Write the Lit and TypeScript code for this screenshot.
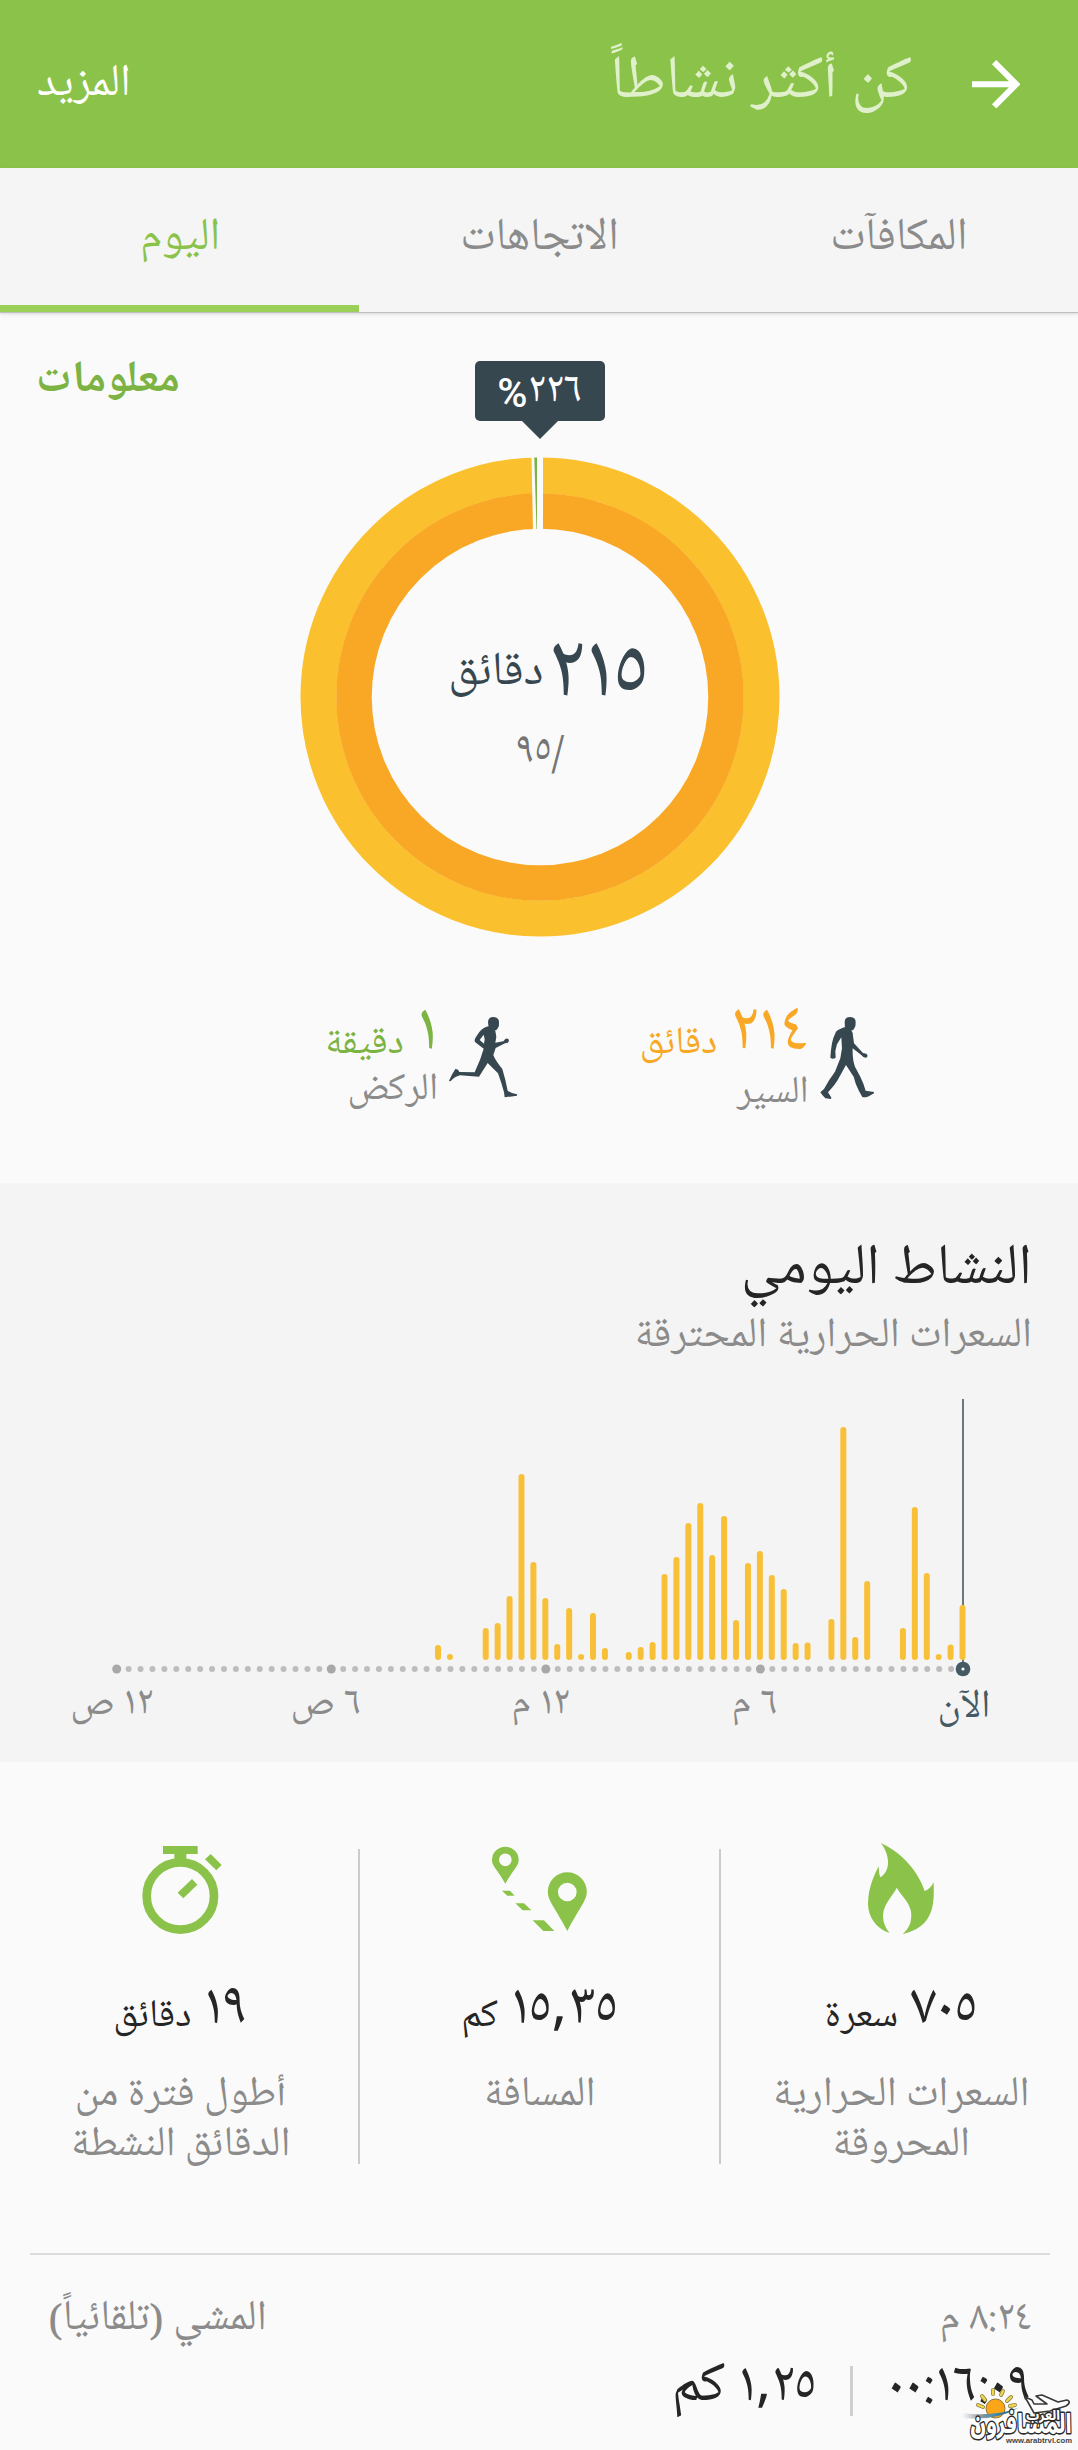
import { LitElement, html, css, svg } from "lit";
import { customElement } from "lit/decorators.js";

/* Slot index (20 minute steps from midnight) and bar height in px. */
const BARS: [number, number][] = [
  [27, 15], [28, 6], [31, 32], [32, 37], [33, 64], [34, 186], [35, 98], [36, 62],
  [37, 16], [38, 52], [39, 6], [40, 47], [41, 12], [43, 8], [44, 13], [45, 18],
  [46, 86], [47, 103], [48, 137], [49, 157], [50, 105], [51, 144], [52, 40],
  [53, 97], [54, 109], [55, 85], [56, 71], [57, 17], [58, 17.5], [60, 41],
  [61, 233], [62, 23], [63, 79], [66, 32], [67, 153], [68, 87], [69, 6],
  [70, 15.5], [71, 55],
];
const STEP = 11.92;
const START = 116.7;
const NOW = 71;
const slotX = (i: number) => START + i * STEP;

const arrowIcon = html`<svg class="arrow" viewBox="4 4 16 16">
  <path fill="#fff" d="M12 4l-1.41 1.41L16.17 11H4v2h12.17l-5.58 5.59L12 20l8-8z" />
</svg>`;

const walkIcon = html`<svg width="54.3" height="82.3" viewBox="1139 36 163 247">
  <g fill="#37474f">
    <path d="M1213 51Q1213 36 1230 36Q1247 37 1246 53Q1247 64 1241 72Q1236 78 1230 76L1214 70Z" />
    <path d="M1215 66Q1195 72 1187 80Q1178 98 1175 115L1172 135L1170 158Q1178 165 1186 158L1185 138L1190 118L1203 97L1205 130L1200 160L1184 200Q1165 225 1151 252L1140 262Q1146 272 1155 280L1172 282L1173 278L1163 262Q1186 238 1195 220L1217 180L1240 215Q1246 240 1256 258L1266 276Q1276 281 1302 264L1301 261L1276 257Q1270 235 1260 215L1244 185Q1236 165 1237 130L1262 149Q1272 161 1280 157Q1284 151 1278 146L1268 144L1241 115L1238 92Q1238 82 1232 74Z" />
  </g>
</svg>`;

const runIcon = html`<svg width="68" height="81" viewBox="27 36 204 243">
  <g fill="#37474f">
    <path d="M144 52Q144 36 161 36Q178 38 177 52Q179 64 172 72Q166 80 158 76L146 68Z" />
    <path fill-rule="evenodd" d="M148 64L166 78L169 95L166 113L190 109L196 102Q206 98 207 108Q204 116 195 115L167 129L160 150Q165 165 187 192Q197 225 203 257Q215 265 231 268L231 272L194 277L192 262Q184 232 174 205L143 174L117 215L60 211Q42 216 32 229L27 228Q34 210 46 192Q55 192 58 201L104 202L121 162L131 131L106 112Q101 106 108 96L118 81Q130 66 148 64ZM131 89L119 105L132 116L134 103Z" />
  </g>
</svg>`;

const flameIcon = html`<svg width="66.7" height="91" viewBox="1164 24 200 273">
  <path fill="#8bc34a" d="M1202 24C1250 45 1310 95 1334 168C1345 165 1355 155 1361 142C1362 200 1367 275 1268 297C1290 280 1296 255 1293 230C1288 200 1265 184 1250 158C1240 182 1212 202 1209 240C1209 265 1218 280 1229 294C1185 280 1163 240 1164 205C1165 160 1180 125 1196 94C1197 108 1197 118 1201 127C1235 105 1228 55 1202 24Z" />
</svg>`;

const routeIcon = html`<svg class="route" width="95.3" height="85.3" viewBox="36 32 286 256">
  <g fill="#8bc34a">
    <path fill-rule="evenodd" d="M262 111A58.500 58.500 0 0 1 320.500 169.500C320 196 304 209 262 287C220 209 204 196 203.500 169.500A58.500 58.500 0 0 1 262 111ZM262 142A28 28 0 1 0 262 198A28 28 0 1 0 262 142Z" />
    <path fill-rule="evenodd" d="M76 34A40 40 0 0 1 116 74C116 92 101 101 76 145C51 101 36 92 36 74A40 40 0 0 1 76 34ZM76 54.500A19 19 0 1 0 76 92.500A19 19 0 1 0 76 54.500Z" />
    <path d="M66 166H90L104 181H82ZM106 204H132L154 225H128ZM158 255H192L223 287H190Z" />
  </g>
</svg>`;

const stopwatchIcon = html`<svg class="route" width="82.7" height="88" viewBox="26 33 248 264">
  <circle cx="150" cy="183" r="101" fill="none" stroke="#8bc34a" stroke-width="26" />
  <path fill="#8bc34a" d="M98 33H202V57H168V78H132V57H98ZM241 57L274 90L258 106L224 73ZM185 132L201 149L159 190L142 173Z" />
</svg>`;

const donut = html`<svg class="donut" viewBox="-240 -240 480 480">
  <circle r="221.500" fill="none" stroke="#fbc02d" stroke-width="36" />
  <circle r="186" fill="none" stroke="#f9a825" stroke-width="35.500" />
  <path fill="#fafafa" d="M-8.500 -241H3V-166H-7Z" />
  <path fill="#7cb342" d="M-5.700 -239.500H-3V-168H-3.500Z" />
</svg>`;

const chart = html`<svg class="plot" width="1078" height="282" viewBox="0 0 1078 282">
  <rect x="962" y="0" width="2" height="270" fill="#6b777d" />
  ${BARS.map(([i, h]) => svg`<rect x=${slotX(i) - 3.5} y=${261 - h} width="6" height=${h} rx="3" fill="#f8c038" />`)}
  ${Array.from({ length: NOW }, (_, i) =>
    i % 18 === 0
      ? svg`<circle cx=${slotX(i)} cy="270" r="4.500" fill="#a8a8a8" />`
      : svg`<circle cx=${slotX(i)} cy="270" r="3" fill="#bdbdbd" />`)}
  <circle cx="963" cy="270" r="7.300" fill="#455a64" />
  <circle cx="963" cy="270" r="1.600" fill="#fff" />
</svg>`;

const siteMark = html`<svg class="mark" width="118" height="62" viewBox="960 2388 118 62">
  <defs>
    <linearGradient id="wave" x1="0" x2="1"><stop offset="0" stop-color="#9aa4aa" stop-opacity="0" /><stop offset=".35" stop-color="#8b969c" /><stop offset=".6" stop-color="#3f88b0" /><stop offset="1" stop-color="#27506b" /></linearGradient>
  </defs>
  <g stroke="#8d8448" stroke-width="4" stroke-linecap="round">
    <path d="M978 2405l5 2M982 2396l3 4M993 2390v4M1003 2391l-2 4M1011 2397l-4 4M1015 2405l-5 1" />
  </g>
  <g stroke="#f2d649" stroke-width="2.400" stroke-linecap="round">
    <path d="M978 2405l5 2M982 2396l3 4M993 2390v4M1003 2391l-2 4M1011 2397l-4 4M1015 2405l-5 1" />
  </g>
  <circle cx="995.500" cy="2408.500" r="9.500" fill="#fba619" stroke="#8f7434" stroke-width="1" />
  <path fill="#fff" d="M968 2418Q998 2424 1018 2410L1026 2412Q1000 2430 968 2421Z" />
  <path fill="url(#wave)" d="M962 2413Q994 2417 1018 2408Q996 2421 962 2418Z" />
  <path fill="#fff" stroke="#3a3a3a" stroke-width="1.600" stroke-linejoin="round" d="M1025 2397L1032 2400L1034 2404L1047 2404L1036 2396L1042 2395L1058 2402L1067 2400Q1072 2402 1066 2406L1050 2411L1034 2413Z" />
  <g class="marktext" text-anchor="middle">
    <text x="1021" y="2433" font-size="27" textLength="101" lengthAdjust="spacingAndGlyphs">المسافرون</text>
    <text x="1043" y="2420" font-size="13" textLength="34" lengthAdjust="spacingAndGlyphs">العرب</text>
  </g>
  <text class="url" x="1039" y="2442.500" text-anchor="middle" font-size="8" textLength="66" lengthAdjust="spacingAndGlyphs">www.arabtrvl.com</text>
</svg>`;

@customElement("app-root")
export class AppRoot extends LitElement {
  static styles = css`
    :host {
      display: block;
      position: relative;
      width: 1078px;
      height: 2450px;
      overflow: hidden;
      direction: rtl;
      background: #fafafa;
      color: #8b8b8b;
      font-family: "Noto Naskh Arabic UI", "Noto Naskh Arabic", "Noto Sans", sans-serif;
      white-space: nowrap;
    }
    * { box-sizing: border-box; }
    svg { display: block; flex: none; }
    .header {
      display: flex;
      align-items: center;
      height: 168px;
      padding: 0 58px 0 37px;
      background: #8bc34a;
      color: #fff;
    }
    .arrow { width: 48.5px; height: 48.5px; }
    .title { margin: -4px 59.5px 0 auto; font-size: 60.8px; line-height: 80px; color: #dff0cb; }
    .more { font-size: 45px; line-height: 60px; }
    .tabs {
      position: relative;
      display: grid;
      grid-template-columns: 1fr 1fr 1fr;
      height: 144px;
      background: #f5f5f5;
      box-shadow: 0 1px 1px #c0c0c0, 0 2px 4px rgba(0, 0, 0, 0.12);
      font-size: 45.5px;
      line-height: 60px;
      text-align: center;
    }
    .tab { padding: 39px 0 0 1px; }
    .tab.active { color: #8bc34a; border-bottom: 7px solid #9ad058; }
    .summary { height: 871px; padding: 45px 0 0 2px; }
    .top { display: grid; grid-template-columns: 1fr 130px 1fr; align-items: start; }
    .tip { grid-column: 2; margin-top: 4px; color: #fff; }
    .bubble {
      height: 60px;
      border-radius: 5px;
      background: #37474f;
      font-size: 43.5px;
      line-height: 59px;
      text-align: center;
    }
    .pct { font-family: Roboto, sans-serif; font-size: 41px; font-weight: 500; line-height: 0; }
    .notch { width: 36px; height: 18px; margin: 0 auto; background: #37474f; clip-path: polygon(0 0, 100% 0, 50% 100%); }
    .info { padding: 1px 0 0 34px; font-size: 44.7px; line-height: 44px; font-weight: 700; color: #7cb342; text-align: left; }
    .ring { display: grid; justify-content: center; margin-top: 18px; }
    .ring > * { grid-area: 1 / 1; }
    .donut { width: 480px; height: 480px; }
    .total { padding-top: 166px; text-align: center; }
    .minutes { display: flex; justify-content: center; align-items: center; gap: 3px; height: 100px; padding-left: 17px; color: #37474f; }
    .minutes b { font-weight: 400; font-size: 92px; line-height: 100px; }
    .minutes span { margin-top: -2px; font-size: 47.5px; line-height: 100px; }
    .goal { margin-top: 3px; font-size: 43.6px; line-height: 50px; color: #757575; }
    .activities { display: flex; padding: 66px 204px 0 0; }
    .activity { display: flex; gap: 11px; width: 357px; }
    .activity svg { margin-top: 14px; }
    .count { display: flex; align-items: baseline; gap: 12.5px; height: 56px; }
    .count b { font-weight: 400; font-size: 68.8px; line-height: 56px; }
    .count span { font-size: 38.6px; line-height: 39px; }
    .kind { margin-top: 11px; font-size: 38.2px; line-height: 44px; }
    .walk .count { color: #f9a825; }
    .run .count { color: #7cb342; }
    .run .kind { margin-top: 8px; }
    .daily { height: 579px; padding-top: 56px; background: #f4f4f4; }
    .daily h2 { margin: 0 46px 0 0; font-weight: 400; font-size: 57.4px; line-height: 60px; color: #252525; }
    .daily p { margin: 12px 46px 38px 0; font-size: 41.8px; line-height: 50px; }
    .axis {
      display: grid;
      grid-template-columns: 207px repeat(4, 214.4px);
      padding: 1px 9px 0 0;
      font-size: 40.4px;
      line-height: 44px;
      text-align: center;
    }
    .now { padding: 3px 3px 0 0; font-size: 39.4px; color: #455a64; }
    .stats { display: grid; grid-template-columns: 357px 2px 359px 2px 358px; height: 402px; padding-top: 81px; }
    .rule { height: 315px; margin-top: 6px; background: #cbcbcb; }
    .stat { display: flex; flex-direction: column; align-items: center; }
    .stat.inset { padding-left: 3px; }
    .icon { height: 91px; }
    .route { margin-top: 3px; }
    .value { display: flex; align-items: baseline; gap: 12.5px; height: 60px; margin-top: 44px; color: #252525; }
    .value b { font-weight: 400; font-size: 58.8px; line-height: 60px; }
    .value span { font-size: 39px; line-height: 40px; }
    .name { margin-top: 32px; font-size: 42px; line-height: 49.5px; text-align: center; }
    .workout { margin: 89px 28px 0 30px; border-top: 2px solid #dcdcdc; padding: 39px 18px 0 18px; }
    .when { display: flex; justify-content: space-between; font-size: 42.3px; line-height: 50px; }
    .figures { display: flex; margin-top: 12px; font-size: 56.8px; line-height: 60px; color: #252525; }
    .bar { width: 3px; height: 50px; margin: 10px 34px 0; background: #cfcfcf; }
    .mark { position: absolute; left: 960px; top: 2388px; direction: ltr; }
    .marktext { font-family: "Noto Sans Arabic", "DejaVu Sans", sans-serif; font-weight: 800; fill: #fff; stroke: #2c2c2c; stroke-width: 3px; stroke-linejoin: round; paint-order: stroke; direction: rtl; }
    .url { font-family: "Liberation Sans", sans-serif; font-weight: 700; fill: #444; }
  `;

  private stat(icon: unknown, value: string, unit: string, name: unknown, inset = true) {
    return html`<div class="stat ${inset ? "inset" : ""}">
      <div class="icon">${icon}</div>
      <div class="value"><b>${value}</b><span>${unit}</span></div>
      <div class="name">${name}</div>
    </div>`;
  }

  render() {
    return html`
      <header class="header">
        ${arrowIcon}
        <div class="title">كن أكثر نشاطاً</div>
        <div class="more">المزيد</div>
      </header>
      <nav class="tabs">
        <div class="tab">المكافآت</div>
        <div class="tab">الاتجاهات</div>
        <div class="tab active">اليوم</div>
      </nav>
      <section class="summary">
        <div class="top">
          <div class="tip">
            <div class="bubble">٢٢٦<span class="pct">%</span></div>
            <div class="notch"></div>
          </div>
          <div class="info">معلومات</div>
        </div>
        <div class="ring">
          ${donut}
          <div class="total">
            <div class="minutes"><b>٢١٥</b><span>دقائق</span></div>
            <div class="goal">/٩٥</div>
          </div>
        </div>
        <div class="activities">
          <div class="activity walk">
            ${walkIcon}
            <div>
              <div class="count"><b>٢١٤</b><span>دقائق</span></div>
              <div class="kind">السير</div>
            </div>
          </div>
          <div class="activity run">
            ${runIcon}
            <div>
              <div class="count"><b>١</b><span>دقيقة</span></div>
              <div class="kind">الركض</div>
            </div>
          </div>
        </div>
      </section>
      <section class="daily">
        <h2>النشاط اليومي</h2>
        <p>السعرات الحرارية المحترقة</p>
        ${chart}
        <div class="axis">
          <div class="now">الآن</div>
          <div>٦ م</div>
          <div>١٢ م</div>
          <div>٦ ص</div>
          <div>١٢ ص</div>
        </div>
      </section>
      <section class="stats">
        ${this.stat(flameIcon, "٧٠٥", "سعرة", html`السعرات الحرارية<br />المحروقة`)}
        <div class="rule"></div>
        ${this.stat(routeIcon, "١٥,٣٥", "كم", "المسافة", false)}
        <div class="rule"></div>
        ${this.stat(stopwatchIcon, "١٩", "دقائق", html`أطول فترة من<br />الدقائق النشطة`)}
      </section>
      <section class="workout">
        <div class="when"><span>٨:٢٤ م</span><span>المشي (تلقائياً)</span></div>
        <div class="figures">
          <span>٠٠:١٦:٠٩</span>
          <div class="bar"></div>
          <span>١,٢٥ كم</span>
        </div>
      </section>
      ${siteMark}
    `;
  }
}
